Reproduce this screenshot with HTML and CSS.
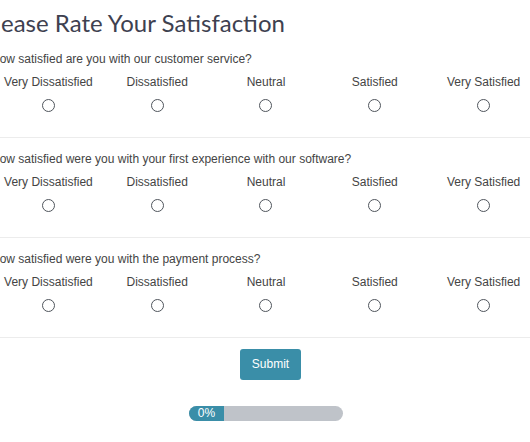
FILE: index.html
```html
<!DOCTYPE html>
<html lang="en">
<head>
    <meta charset="UTF-8">
    <meta name="viewport" content="width=device-width, initial-scale=1.0">
    <title>Satisfaction Survey</title>
    <link rel="stylesheet" href="styles.css">
</head>
<body>
    <div class="survey">
        <h1 class="title">Please Rate Your Satisfaction</h1>

        <div class="question">
            <p class="question-text">How satisfied are you with our customer service?</p>
            <div class="options">
                <label class="option"><span>Very Dissatisfied</span><input type="radio" name="q1" value="1"></label>
                <label class="option"><span>Dissatisfied</span><input type="radio" name="q1" value="2"></label>
                <label class="option"><span>Neutral</span><input type="radio" name="q1" value="3"></label>
                <label class="option"><span>Satisfied</span><input type="radio" name="q1" value="4"></label>
                <label class="option"><span>Very Satisfied</span><input type="radio" name="q1" value="5"></label>
            </div>
        </div>

        <div class="question">
            <p class="question-text">How satisfied were you with your first experience with our software?</p>
            <div class="options">
                <label class="option"><span>Very Dissatisfied</span><input type="radio" name="q2" value="1"></label>
                <label class="option"><span>Dissatisfied</span><input type="radio" name="q2" value="2"></label>
                <label class="option"><span>Neutral</span><input type="radio" name="q2" value="3"></label>
                <label class="option"><span>Satisfied</span><input type="radio" name="q2" value="4"></label>
                <label class="option"><span>Very Satisfied</span><input type="radio" name="q2" value="5"></label>
            </div>
        </div>

        <div class="question">
            <p class="question-text">How satisfied were you with the payment process?</p>
            <div class="options">
                <label class="option"><span>Very Dissatisfied</span><input type="radio" name="q3" value="1"></label>
                <label class="option"><span>Dissatisfied</span><input type="radio" name="q3" value="2"></label>
                <label class="option"><span>Neutral</span><input type="radio" name="q3" value="3"></label>
                <label class="option"><span>Satisfied</span><input type="radio" name="q3" value="4"></label>
                <label class="option"><span>Very Satisfied</span><input type="radio" name="q3" value="5"></label>
            </div>
        </div>

        <div class="actions">
            <button class="submit">Submit</button>
        </div>

        <div class="progress">
            <div class="progress-fill">0%</div>
        </div>
    </div>
</body>
</html>
```

FILE: styles.css
```css
html, body {
    overflow: hidden;
}

body {
    margin: 0;
    background-color: #fff;
    font-family: 'Liberation Sans', Arial, sans-serif;
    color: #444;
}

.survey {
    width: 550px;
    margin-left: -9px;
}

.title {
    height: 30px;
    margin: 0 0 0 -10px;
    padding-top: 8px;
    font-family: 'Lato', sans-serif;
    font-size: 24px;
    font-weight: 400;
    line-height: 30px;
    color: #3e4150;
}

.question {
    height: 74px;
    padding: 13px 0 12px;
    border-bottom: 1px solid #ececec;
}

.question-text {
    height: 16px;
    margin: 0 0 7px;
    font-size: 12px;
    line-height: 16px;
}

.options {
    display: grid;
    grid-template-columns: repeat(5, 1fr);
    width: 544px;
    margin-left: 3px;
}

.option {
    display: flex;
    flex-direction: column;
    align-items: center;
    font-size: 12px;
    line-height: 16px;
}

.option input {
    appearance: none;
    width: 13px;
    height: 13px;
    margin: 9px 0 0;
    border: 1.5px solid #4f555c;
    border-radius: 50%;
    background: #fff;
}

.actions {
    display: flex;
    justify-content: center;
    margin-top: 11px;
    padding-left: 9px;
}

.submit {
    height: 31px;
    padding: 0 11.5px;
    border: none;
    border-radius: 3px;
    background-color: #3a8ea8;
    color: #fff;
    font-family: 'Liberation Sans', Arial, sans-serif;
    font-size: 12px;
    line-height: 15px;
}

.progress {
    width: 154px;
    height: 15px;
    margin: 26px auto 0;
    border-radius: 8px;
    overflow: hidden;
    background-color: #bfc3c9;
}

.progress-fill {
    width: 35px;
    height: 15px;
    background-color: #3a8ea8;
    color: #fff;
    font-size: 12px;
    line-height: 15px;
    text-align: center;
}
```
